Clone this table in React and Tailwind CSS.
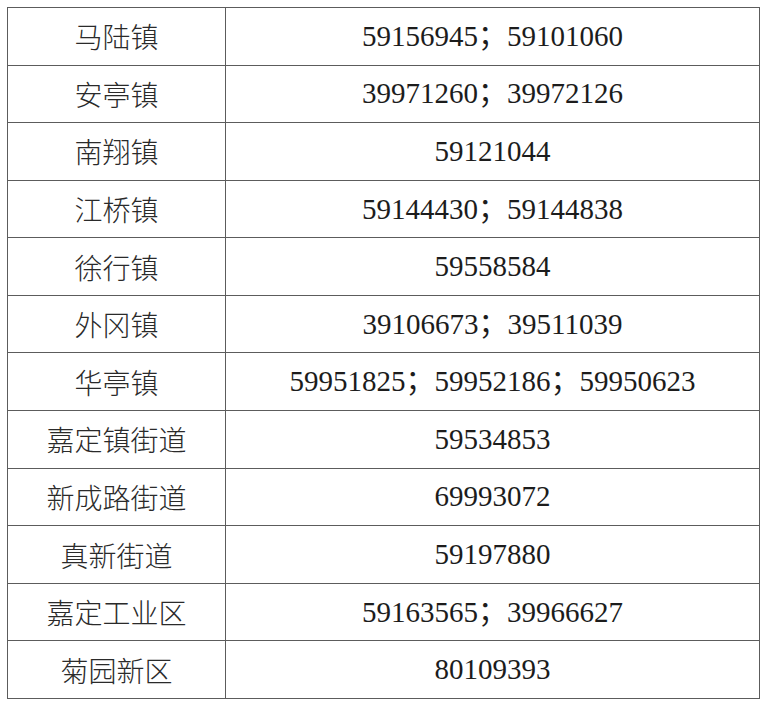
const ROWS = [
  ["马陆镇", "59156945；59101060"],
  ["安亭镇", "39971260；39972126"],
  ["南翔镇", "59121044"],
  ["江桥镇", "59144430；59144838"],
  ["徐行镇", "59558584"],
  ["外冈镇", "39106673；39511039"],
  ["华亭镇", "59951825；59952186；59950623"],
  ["嘉定镇街道", "59534853"],
  ["新成路街道", "69993072"],
  ["真新街道", "59197880"],
  ["嘉定工业区", "59163565；39966627"],
  ["菊园新区", "80109393"],
];

export default function App() {
  return (
    <div className="min-h-[705px] w-[768px] bg-white pl-[7px] pt-[7px]">
      <div className="grid h-[692px] w-[753px] grid-cols-[218px_1fr] grid-rows-12 border-l border-t border-[#5c5c5c] text-[#1c1c1c]">
        {ROWS.map(([name, phone]) => (
          <Row key={name} name={name} phone={phone} />
        ))}
      </div>
    </div>
  );
}

function Row({ name, phone }) {
  return (
    <>
      <div className="flex items-center justify-center border-b border-r border-[#5c5c5c] font-['Noto_Sans_CJK_SC',sans-serif] text-[28px] font-light leading-none text-[#2a2a2a]">
        {name}
      </div>
      <div className="flex items-center justify-center border-b border-r border-[#5c5c5c] font-['Liberation_Serif','Noto_Sans_CJK_SC',serif] text-[29px] leading-none">
        {phone}
      </div>
    </>
  );
}
